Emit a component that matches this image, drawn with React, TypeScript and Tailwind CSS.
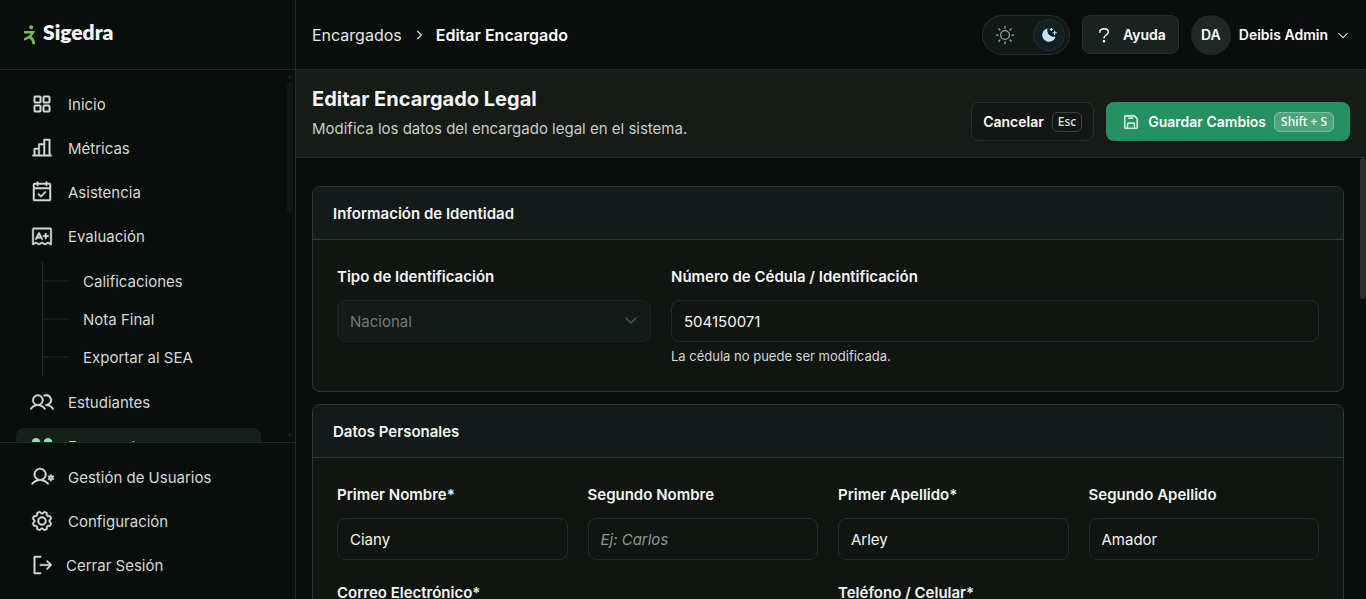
import type { ComponentType, ReactNode } from "react";
import {
  PiSquaresFour,
  PiChartBar,
  PiCalendarCheck,
  PiExam,
  PiUsers,
  PiUserGear,
  PiGear,
  PiSignOut,
  PiSun,
  PiMoonStarsFill,
  PiFloppyDisk,
  PiCaretDown,
  PiCaretDownBold,
  PiCaretRightBold,
} from "react-icons/pi";

function GuardiansIcon({ className }: { className?: string }) {
  return (
    <svg viewBox="0 0 24 24" className={className} fill="currentColor" aria-hidden="true">
      <g stroke="none">
        <circle cx="6" cy="8.200" r="4.200" />
        <circle cx="18" cy="8.200" r="4.200" />
        <path d="M0 19c.6-3.600 3-5.600 6-5.600s5.400 2 6 5.600c.6-3.600 3-5.600 6-5.600s5.400 2 6 5.600z" />
      </g>
    </svg>
  );
}

function NavItem({ icon: Icon, label, active = false }: {
  icon: ComponentType<{ className?: string }>;
  label: string;
  active?: boolean;
}) {
  return (
    <li>
      <a
        href="#"
        aria-current={active ? "page" : undefined}
        className={
          active
            ? "flex h-9 items-center gap-3.5 rounded-lg bg-[#14211a] px-3.5 text-[#8fe0ab]"
            : "flex h-9 items-center gap-3.5 rounded-lg px-3.5 text-[#d3dad6]"
        }
      >
        <Icon className="size-6 shrink-0 stroke-current stroke-5" />
        <span className="pt-0.5">{label}</span>
      </a>
    </li>
  );
}

function SubItem({ label }: { label: string }) {
  return (
    <li className="flex h-[38px] items-center gap-3.5">
      <span className="h-0.5 w-[26px] bg-[#161b19]" />
      <a href="#" className="pt-0.5 text-[#d3dad6]">
        {label}
      </a>
    </li>
  );
}

function Sidebar() {
  return (
    <aside className="flex w-[296px] shrink-0 flex-col border-r border-[#242a28]">
      <div className="flex h-[70px] shrink-0 items-center border-b border-[#242a28] px-6 pb-1.5">
        <a href="#" className="flex items-center gap-[7px] font-['Lato'] text-[21px] font-extrabold text-[#f4f6f5]">
          <svg viewBox="0 0 12 20" className="mt-1.5 h-5 w-3" fill="none" stroke="#6fbf5f" aria-hidden="true">
            <circle cx="7.2" cy="2.2" r="2" fill="#6fbf5f" stroke="none" />
            <path d="M0 7.2h9L6.3 11.2 0 14.6" strokeWidth="2.4" />
            <path d="M4.5 11.8c3.2.4 4.9 2.2 5.3 7.4" strokeWidth="2.8" />
          </svg>
          Sigedra
        </a>
      </div>
      <nav aria-label="Principal" className="relative min-h-0 flex-1 overflow-hidden pt-4 pr-[34px] pl-4">
        <ul className="flex flex-col gap-2">
          <NavItem icon={PiSquaresFour} label="Inicio" />
          <NavItem icon={PiChartBar} label="Métricas" />
          <NavItem icon={PiCalendarCheck} label="Asistencia" />
          <NavItem icon={PiExam} label="Evaluación" />
          <li>
            <ul className="ml-[26px] border-l border-[#242a28]">
              <SubItem label="Calificaciones" />
              <SubItem label="Nota Final" />
              <SubItem label="Exportar al SEA" />
            </ul>
          </li>
          <NavItem icon={PiUsers} label="Estudiantes" />
          <NavItem icon={GuardiansIcon} label="Encargados" active />
        </ul>
        <div aria-hidden="true" className="absolute inset-y-0 right-0.5 flex w-1.5 flex-col items-center justify-between py-1">
          <div className="flex w-full flex-col items-center gap-1">
            <svg viewBox="0 0 6 4" className="h-1 w-1.5" fill="#1a1f1d"><path d="M3 0l3 4H0z" /></svg>
            <span className="h-[131px] w-full rounded-full bg-[#121715]" />
          </div>
          <svg viewBox="0 0 6 4" className="h-1 w-1.5" fill="#1a1f1d"><path d="M0 0h6L3 4z" /></svg>
        </div>
      </nav>
      <nav aria-label="Cuenta" className="shrink-0 border-t border-[#242a28] px-4 pt-4 pb-4">
        <ul className="flex flex-col gap-2">
          <NavItem icon={PiUserGear} label="Gestión de Usuarios" />
          <NavItem icon={PiGear} label="Configuración" />
          <li>
            <button type="button" className="flex h-9 w-full items-center gap-3 rounded-lg px-3.5 text-[#d3dad6]">
              <PiSignOut className="size-6 shrink-0 stroke-current stroke-5" />
              <span className="pt-0.5">Cerrar Sesión</span>
            </button>
          </li>
        </ul>
      </nav>
    </aside>
  );
}

function TopBar() {
  return (
    <header className="flex h-[70px] shrink-0 items-center justify-between border-b border-[#242a28] px-4">
      <nav aria-label="Ruta" className="flex items-center gap-[11px] text-base">
        <a href="#" className="text-[#e4e9e6]">Encargados</a>
        <PiCaretRightBold className="size-3 text-[#e4e9e6]" />
        <span className="font-semibold text-white">Editar Encargado</span>
      </nav>
      <div className="flex items-center gap-3">
        <div className="flex h-10 w-[88px] items-center justify-between rounded-full border border-[#26302c] bg-[#121816] pr-1 pl-3">
          <button type="button" aria-label="Modo claro" className="text-[#9aa5a0]">
            <PiSun className="size-5" />
          </button>
          <button
            type="button"
            aria-label="Modo oscuro"
            className="flex size-8 items-center justify-center rounded-full border border-[#20322f] bg-[#102027] text-[#bfe6fb]"
          >
            <PiMoonStarsFill className="size-[18px]" />
          </button>
        </div>
        <button
          type="button"
          className="flex h-[39px] items-center gap-2.5 rounded-lg border border-[#27302c] bg-[#1a211e] px-3 text-sm font-semibold text-white"
        >
          <svg viewBox="0 0 18 18" className="size-[18px]" fill="none" stroke="currentColor" strokeWidth="1.4" strokeLinecap="round" aria-hidden="true">
            <path d="M4.8 6.2C4.8 4 6.600 2.800 9 2.800s4.300 1.400 4.300 3.500c0 2.700-4.300 2.700-4.300 5.600" />
            <circle cx="9" cy="15.200" r=".6" fill="currentColor" />
          </svg>
          Ayuda
        </button>
        <button type="button" className="flex items-center gap-2 text-sm font-semibold text-white">
          <span className="flex size-10 items-center justify-center rounded-full bg-[#202725]">DA</span>
          Deibis Admin
          <PiCaretDown className="size-3.5" />
        </button>
      </div>
    </header>
  );
}

function PageHeading() {
  return (
    <div className="flex h-[88px] shrink-0 items-center justify-between border-b border-[#242b28] bg-[#161b18] px-4">
      <div className="pt-0.5">
        <h1 className="text-xl leading-7 font-bold text-[#f3f6f4]">Editar Encargado Legal</h1>
        <p className="leading-8 text-[#c5cec9]">Modifica los datos del encargado legal en el sistema.</p>
      </div>
      <div className="flex items-center gap-3 pt-4 text-sm font-semibold text-white">
        <button type="button" className="flex h-[39px] items-center gap-2 rounded-lg border border-[#262d2a] bg-[#121716] px-[11px]">
          Cancelar
          <kbd className="flex h-5 items-center rounded-md border border-[#37413d] px-[5px] font-['Noto_Sans'] text-xs font-medium text-[#dde3e0]">
            Esc
          </kbd>
        </button>
        <button type="button" className="flex h-[39px] items-center gap-2 rounded-lg bg-[#259160] px-4">
          <PiFloppyDisk className="size-[18px] stroke-current stroke-3" />
          Guardar Cambios
          <kbd className="flex h-5 items-center rounded-md border border-[#7fbf9f] bg-[#4fa47c] px-1.5 font-['Noto_Sans'] text-xs font-medium">
            Shift + S
          </kbd>
        </button>
      </div>
    </div>
  );
}

function Card({ title, children }: { title: string; children: ReactNode }) {
  return (
    <section className="overflow-hidden rounded-lg border border-[#2f3a37] bg-[#111511]">
      <h2 className="flex h-[53px] items-center border-b border-[#2f3a37] bg-[#141a19] px-5 pt-0.5 font-semibold text-[#f3f6f4]">
        {title}
      </h2>
      <div className="px-6 py-[25px]">{children}</div>
    </section>
  );
}

function Field({ id, label, value, placeholder, note, readOnly, className }: {
  id: string;
  label: string;
  value?: string;
  placeholder?: string;
  note?: string;
  readOnly?: boolean;
  className?: string;
}) {
  return (
    <div className={className}>
      <label htmlFor={id} className="block leading-6 font-semibold text-[#f3f6f4]">{label}</label>
      <input
        id={id}
        defaultValue={value}
        placeholder={placeholder}
        readOnly={readOnly}
        className="mt-[11px] block h-[42px] w-full rounded-lg border border-[#242c29] bg-transparent px-3 text-[#f3f6f4] placeholder:text-[#8b9590] placeholder:italic"
      />
      {note && <p className="mt-1 text-[13px] leading-5 text-[#d3dad6]">{note}</p>}
    </div>
  );
}

export default function App() {
  return (
    <div className="flex h-screen overflow-hidden bg-[#090d0c] font-['Inter',sans-serif] text-[15px]">
      <Sidebar />
      <div className="flex min-w-0 flex-1 flex-col">
        <TopBar />
        <PageHeading />
        <main className="relative min-h-0 flex-1 overflow-hidden pt-7 pr-[22px] pl-4">
          <form className="flex flex-col gap-3">
            <Card title="Información de Identidad">
              <div className="grid grid-cols-3 gap-5">
                <div>
                  <label htmlFor="tipo" className="block leading-6 font-semibold text-[#f3f6f4]">Tipo de Identificación</label>
                  <div className="relative mt-[11px]">
                    <select
                      id="tipo"
                      disabled
                      className="block h-[42px] w-full appearance-none rounded-lg border border-[#1c2321] bg-[#141a18] px-3 pt-0.5 text-[#727a76] opacity-100"
                    >
                      <option>Nacional</option>
                    </select>
                    <PiCaretDownBold className="pointer-events-none absolute top-3 right-3 size-4 text-[#4d5358]" />
                  </div>
                </div>
                <Field
                  id="cedula"
                  label="Número de Cédula / Identificación"
                  value="504150071"
                  note="La cédula no puede ser modificada."
                  readOnly
                  className="col-span-2"
                />
              </div>
            </Card>
            <Card title="Datos Personales">
              <div className="grid grid-cols-4 gap-x-5 gap-y-[21px]">
                <Field id="nombre1" label="Primer Nombre*" value="Ciany" />
                <Field id="nombre2" label="Segundo Nombre" placeholder="Ej: Carlos" />
                <Field id="apellido1" label="Primer Apellido*" value="Arley" />
                <Field id="apellido2" label="Segundo Apellido" value="Amador" />
                <Field id="correo" label="Correo Electrónico*" className="col-span-2" />
                <Field id="telefono" label="Teléfono / Celular*" className="col-span-2" />
              </div>
            </Card>
          </form>
          <span aria-hidden="true" className="absolute top-0 right-0 h-[141px] w-1.5 rounded-full bg-[#2c2c2c]" />
        </main>
      </div>
    </div>
  );
}
